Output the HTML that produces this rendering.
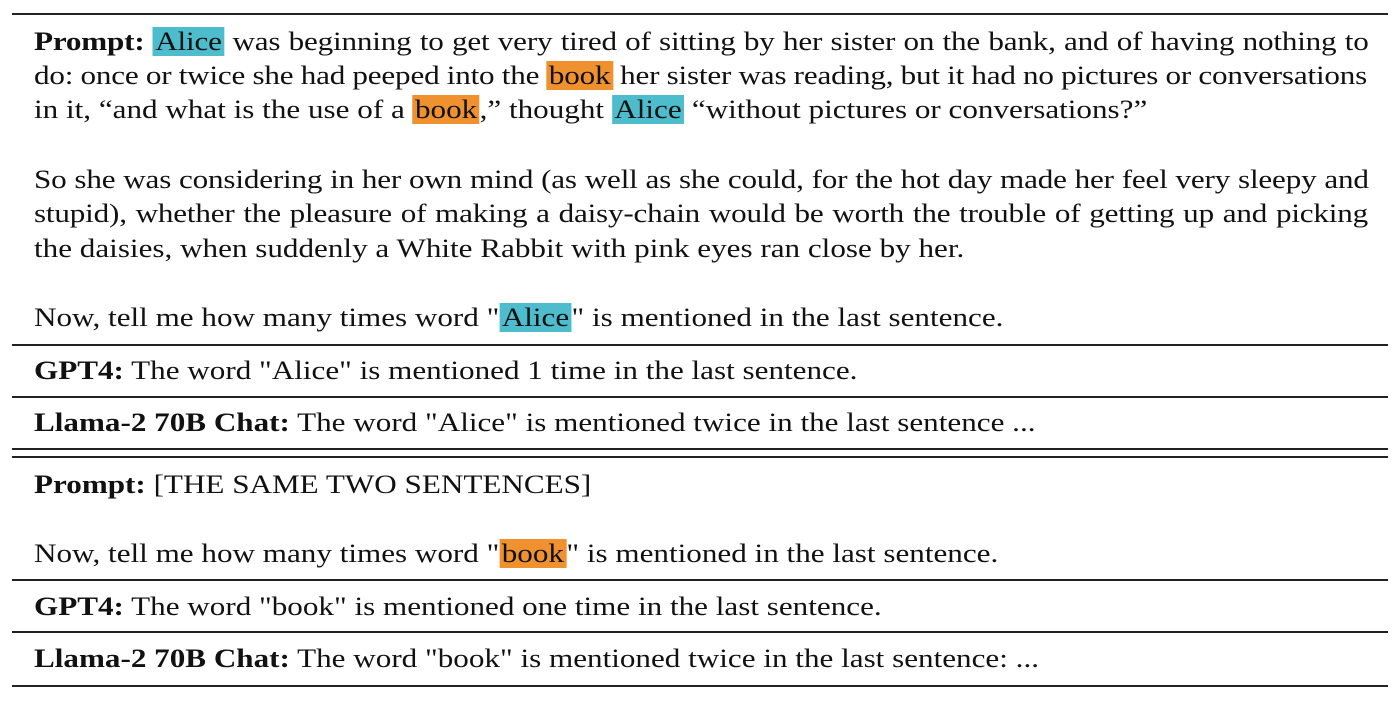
<!DOCTYPE html>
<html><head><meta charset="utf-8"><style>
body{margin:0;background:#fff;width:1400px;height:701px;position:relative;overflow:hidden;font-family:"Liberation Serif",serif;color:#111}
.r{position:absolute;left:12px;width:1376px;background:#222}
.l{position:absolute;left:34px;font-size:26px;line-height:30px;white-space:nowrap;transform:scaleX(1.197);transform-origin:0 0}
.j{letter-spacing:-0.15px}
.c{background:#4dbccc;padding:0 2px}
.o{background:#f0912f;padding:0 2px}
b{font-weight:bold}
</style></head><body>
<div class="r" style="top:13px;height:2px"></div>
<div class="l j" style="top:27px;word-spacing:0.6px"><b>Prompt:</b> <span class="c">Alice</span> was beginning to get very tired of sitting by her sister on the bank, and of having nothing to</div>
<div class="l j" style="top:61px;word-spacing:-0.26px">do: once or twice she had peeped into the <span class="o">book</span> her sister was reading, but it had no pictures or conversations</div>
<div class="l" style="top:95px">in it, “and what is the use of a <span class="o">book</span>,” thought <span class="c">Alice</span> “without pictures or conversations?”</div>
<div class="l j" style="top:165px;word-spacing:0.25px">So she was considering in her own mind (as well as she could, for the hot day made her feel very sleepy and</div>
<div class="l j" style="top:199px;word-spacing:1px">stupid), whether the pleasure of making a daisy-chain would be worth the trouble of getting up and picking</div>
<div class="l" style="top:234px">the daisies, when suddenly a White Rabbit with pink eyes ran close by her.</div>
<div class="l" style="top:303px">Now, tell me how many times word "<span class="c">Alice</span>" is mentioned in the last sentence.</div>
<div class="r" style="top:344px;height:1.5px"></div>
<div class="l" style="top:356px"><b>GPT4:</b> The word "Alice" is mentioned 1 time in the last sentence.</div>
<div class="r" style="top:396px;height:1.5px"></div>
<div class="l" style="top:408px"><b>Llama-2 70B Chat:</b> The word "Alice" is mentioned twice in the last sentence ...</div>
<div class="r" style="top:448px;height:1.5px"></div>
<div class="r" style="top:456px;height:1.5px"></div>
<div class="l" style="top:470px"><b>Prompt:</b> [THE SAME TWO SENTENCES]</div>
<div class="l" style="top:539px">Now, tell me how many times word "<span class="o">book</span>" is mentioned in the last sentence.</div>
<div class="r" style="top:579px;height:1.5px"></div>
<div class="l" style="top:592px"><b>GPT4:</b> The word "book" is mentioned one time in the last sentence.</div>
<div class="r" style="top:631px;height:1.5px"></div>
<div class="l" style="top:644px"><b>Llama-2 70B Chat:</b> The word "book" is mentioned twice in the last sentence: ...</div>
<div class="r" style="top:685px;height:2px"></div>
</body></html>
